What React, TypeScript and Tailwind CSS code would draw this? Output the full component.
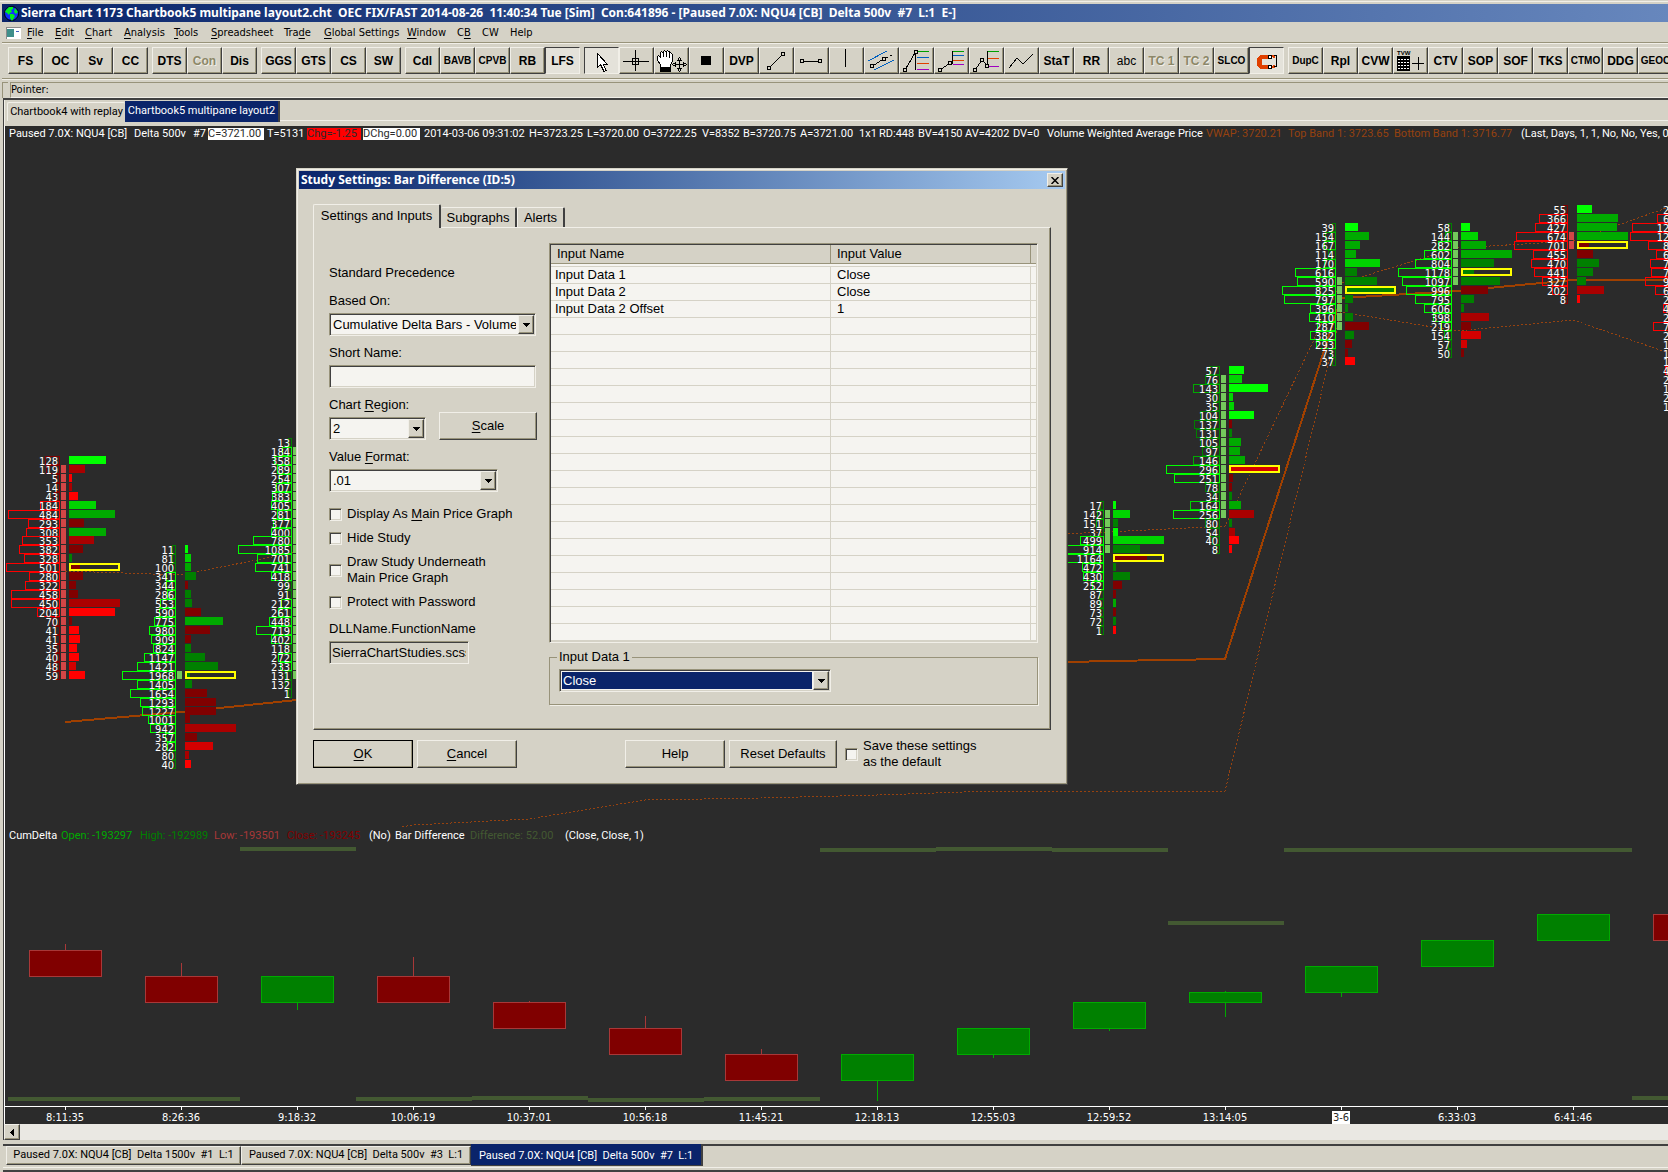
import { ReactNode, useState } from 'react';
import clsx from 'clsx';

const raised = 'bg-[#d5d2c6] border border-t-[#f1efe8] border-l-[#f1efe8] border-r-[#404040] border-b-[#404040] shadow-[inset_-1px_-1px_0_#98937a]';
const sunken = 'border border-t-[#98937a] border-l-[#98937a] border-r-[#f1efe8] border-b-[#f1efe8] shadow-[inset_1px_1px_0_#404040,inset_-1px_-1px_0_#d5d2c6]';
const tahoma = "font-['DejaVu_Sans_Condensed','DejaVu_Sans',sans-serif] text-[11px]";

/* ---------- footprint chart data ---------- */

type Shade = 'g1' | 'g2' | 'g3' | 'g4' | 'r1' | 'r2' | 'r3' | 'r4';
// traded volume, length of the delta bar, shade of the delta bar
type Level = [number, number, Shade];

const shades: Record<Shade, string> = {
  g1: '#008000',
  g2: '#00aa00',
  g3: '#00d400',
  g4: '#00ff00',
  r1: '#800000',
  r2: '#aa0000',
  r3: '#d40000',
  r4: '#ff0000',
};

interface Footprint {
  col: number;
  tick: number;
  side: 'up' | 'down';
  area: [number, number];
  levels: Level[];
}

const plain = (values: number[]): Level[] => values.map(v => [v, 5, 'g1']);

const footprints: Footprint[] = [
  {
    col: 0, tick: 10, side: 'down', area: [1, 24],
    levels: [
      [128, 37, 'g4'], [119, 16, 'r2'], [5, 3, 'r4'], [14, 3, 'r2'], [43, 9, 'r4'], [184, 27, 'g3'], [484, 46, 'g2'],
      [293, 15, 'r1'], [308, 37, 'g2'], [353, 25, 'r2'], [382, 14, 'r1'], [328, 3, 'g1'], [501, 11, 'r1'], [280, 14, 'r1'],
      [322, 7, 'r1'], [458, 9, 'r1'], [450, 51, 'r2'], [204, 46, 'r4'], [70, 3, 'r1'], [41, 10, 'r4'], [41, 11, 'r4'],
      [35, 8, 'r4'], [40, 10, 'r4'], [48, 7, 'r3'], [59, 16, 'r4'],
    ],
  },
  {
    col: 1, tick: 20, side: 'up', area: [14, 14],
    levels: [
      [11, 3, 'g4'], [81, 6, 'g3'], [100, 6, 'g2'], [341, 11, 'g1'], [344, 3, 'r1'], [286, 6, 'g1'], [553, 7, 'g1'],
      [590, 16, 'r1'], [775, 38, 'g2'], [980, 25, 'r1'], [909, 6, 'r1'], [824, 6, 'g1'], [1147, 20, 'g1'], [1421, 33, 'g1'],
      [1968, 5, 'g1'], [1405, 7, 'g1'], [1654, 22, 'r1'], [1293, 31, 'r1'], [1227, 31, 'r1'], [1001, 5, 'r1'], [942, 51, 'r2'],
      [357, 12, 'r1'], [282, 28, 'r3'], [80, 4, 'r2'], [40, 6, 'r4'],
    ],
  },
  {
    col: 2, tick: 8, side: 'up', area: [1, 26],
    levels: plain([
      13, 184, 358, 289, 254, 307, 383, 405, 281, 377, 400, 780, 1085, 701, 741, 418, 99, 91, 212, 261, 448, 719, 402, 118,
      272, 233, 131, 132, 1,
    ]),
  },
  {
    col: 9, tick: 15, side: 'up', area: [1, 5],
    levels: [
      [17, 3, 'g4'], [142, 17, 'g3'], [151, 5, 'g1'], [37, 5, 'g4'], [499, 51, 'g3'], [914, 27, 'g1'], [1164, 34, 'r1'],
      [472, 3, 'g1'], [430, 17, 'g1'], [252, 9, 'r1'], [87, 3, 'r1'], [89, 3, 'g2'], [73, 3, 'r1'], [72, 3, 'g1'], [1, 3, 'r4'],
    ],
  },
  {
    col: 10, tick: 0, side: 'up', area: [1, 16],
    levels: [
      [57, 15, 'g4'], [76, 13, 'g3'], [143, 39, 'g4'], [30, 4, 'g3'], [35, 5, 'g3'], [104, 25, 'g4'], [137, 3, 'r1'],
      [131, 3, 'g1'], [105, 12, 'g2'], [97, 11, 'g2'], [146, 16, 'g2'], [296, 51, 'r3'], [251, 4, 'r1'], [78, 3, 'r1'],
      [34, 3, 'g1'], [164, 12, 'g2'], [256, 25, 'r2'], [80, 3, 'g1'], [54, 6, 'r2'], [40, 10, 'r4'], [8, 3, 'r4'],
    ],
  },
  {
    col: 11, tick: -16, side: 'up', area: [6, 11],
    levels: [
      [39, 13, 'g4'], [154, 24, 'g2'], [167, 15, 'g2'], [114, 11, 'g2'], [170, 35, 'g3'], [616, 12, 'g1'], [590, 32, 'g1'],
      [825, 51, 'g1'], [797, 8, 'g1'], [396, 3, 'g1'], [410, 8, 'g1'], [287, 24, 'r1'], [382, 9, 'g1'], [293, 7, 'r1'],
      [73, 3, 'r1'], [37, 10, 'r4'],
    ],
  },
  {
    col: 12, tick: -16, side: 'up', area: [1, 6],
    levels: [
      [58, 9, 'g4'], [144, 17, 'g3'], [282, 25, 'g2'], [602, 51, 'g2'], [804, 33, 'g1'], [1178, 13, 'g1'], [1097, 39, 'g1'],
      [996, 27, 'r1'], [795, 13, 'g1'], [606, 3, 'g1'], [398, 28, 'r2'], [219, 10, 'r1'], [154, 20, 'r3'], [57, 6, 'r3'],
      [50, 3, 'r1'],
    ],
  },
  {
    col: 13, tick: -18, side: 'down', area: [3, 4],
    levels: [
      [55, 15, 'g4'], [366, 41, 'g2'], [427, 40, 'g2'], [674, 51, 'g2'], [701, 12, 'r1'], [455, 16, 'r1'], [470, 22, 'g1'],
      [441, 16, 'g1'], [327, 9, 'g1'], [202, 27, 'r2'], [8, 3, 'r4'],
    ],
  },
  {
    col: 14, tick: -18, side: 'down', area: [3, 4],
    levels: plain([
      211, 630, 1214, 1270, 832, 640, 786, 756, 906, 664, 218, 470, 264, 711, 236, 152, 184, 168, 431, 242, 174, 223, 147,
    ]),
  },
];

const tickY = (tick: number) => Math.round(366.4 + tick * 8.95);

const outlineColor = (volume: number, side: 'up' | 'down') => {
  const step = volume < 140 ? 1 : volume < 160 ? 2 : volume < 180 ? 3 : 4;
  return shades[`${side === 'up' ? 'g' : 'r'}${step}` as Shade];
};

const FootprintBar = ({ col, tick, side, area, levels }: Footprint) => {
  const x = col * 116;
  const max = Math.max(...levels.map(l => l[0]));
  return (
    <g>
      {levels.map(([volume, bar, shade], i) => {
        const y = tickY(tick + i);
        const w = Math.max(3, Math.round((volume / max) * 53));
        return (
          <g key={i}>
            <rect x={x + 59.5 - w} y={y + 0.5} width={w} height={8} fill="none" stroke={outlineColor(volume, side)} />
            {i >= area[0] && i <= area[1] && (
              <rect x={x + 61} y={y} width={5} height={8} fill={side === 'up' ? '#74c95c' : '#d24646'} />
            )}
            <rect x={x + 69} y={y} width={bar} height={8} fill={shades[shade]} />
            {volume === max && (
              <rect x={x + 70} y={y + 1} width={49} height={6} fill="none" stroke="#ffff00" strokeWidth={2} />
            )}
            <text x={x + 58} y={y + 9} textAnchor="end" fill="#ffffff">{volume}</text>
          </g>
        );
      })}
    </g>
  );
};

/* ---------- lower pane data ---------- */

// open/close box top, bottom, wick top, wick bottom, direction
const candles: [number, number, number, number, 'up' | 'down'][] = [
  [950, 976, 944, 976, 'down'],
  [976, 1002, 963, 1002, 'down'],
  [976, 1002, 976, 1009, 'up'],
  [976, 1002, 957, 1002, 'down'],
  [1002, 1028, 1001, 1028, 'down'],
  [1028, 1054, 1016, 1054, 'down'],
  [1054, 1080, 1049, 1080, 'down'],
  [1054, 1080, 1054, 1100, 'up'],
  [1028, 1054, 1028, 1057, 'up'],
  [1002, 1028, 1002, 1030, 'up'],
  [992, 1002, 991, 1016, 'up'],
  [966, 992, 966, 996, 'up'],
  [940, 966, 940, 966, 'up'],
  [914, 940, 914, 940, 'up'],
  [914, 940, 914, 940, 'down'],
];
const differences = [1097, 1097, 847, 1097, 1096, 1098, 1097, 848, 847, 848, 921, 848, 848, 848, 1096];

const times = [
  '8:11:35', '8:26:36', '9:18:32', '10:06:19', '10:37:01', '10:56:18', '11:45:21', '12:18:13', '12:55:03', '12:59:52',
  '13:14:05', '3-6', '6:33:03', '6:41:46',
];

/* ---------- toolbar ---------- */

const Node = ({ x, y }: { x: number; y: number }) => (
  <rect x={x - 1.5} y={y - 1.5} width={3} height={3} fill="#d5d2c6" stroke="#000" />
);

const levelLines = (x1: number, x2: number, lines: [number, string][]) =>
  lines.map(([y, color]) => <line key={y} x1={x1} x2={x2} y1={y + 0.5} y2={y + 0.5} stroke={color} />);

const icons: Record<string, ReactNode> = {
  pointer: <path d="M13.5 6.5v14l3-3 3.500 7 2-1-3-6.500h4z" fill="#fff" stroke="#000" />,
  crosshair: (
    <g fill="none" stroke="#000">
      <path d="M4 14.500h26M16.500 3v21" />
      <rect x="13.5" y="11.5" width="6" height="6" />
    </g>
  ),
  hand: (
    <g>
      <path d="M6.500 20.500v-3l-3-4v-4l1-1 2 2V6l1-1.500 1.500 1V4.500l1.500-1 1.500 1 1.500-1 1.500 1v1.500l1.500-.5 1.500 1.500v8l-2 4v1.500z" fill="#fff" stroke="#000" />
      <path d="M9.500 5v5M12.500 4v6M15.500 6v5" stroke="#000" />
      <rect x="6" y="21" width="11" height="4" />
      <path d="M25.500 12v11M20 17.500h11" stroke="#000" />
      <path d="M23.500 13.500l2-3 2 3zM23.500 21.500l2 3 2-3zM21.500 15.500l-3 2 3 2zM29.500 15.500l3 2-3 2z" fill="#d5d2c6" stroke="#000" />
    </g>
  ),
  marker: <rect x="12" y="9" width="10" height="9" />,
  line: <g><path d="M10 21L24 7" stroke="#000" /><Node x={10} y={21} /><Node x={24} y={7} /></g>,
  segment: <g><path d="M8 14h18" stroke="#000" /><Node x={8} y={14} /><Node x={26} y={14} /></g>,
  vertical: <path d="M16.500 2v18" stroke="#000" />,
  channel: (
    <g>
      <path d="M4 14L23 4M10 23L30 13" stroke="#0060c0" />
      <path d="M8 19L20 12L28 8" stroke="#000" strokeDasharray="4 1" />
      <Node x={8} y={19} /><Node x={20} y={12} />
    </g>
  ),
  retrace: (
    <g>
      <path d="M6 23L16.500 5v18" fill="none" stroke="#000" />
      {levelLines(18, 30, [[4, '#00a000'], [10, '#0060c0'], [16, '#e04000'], [22, '#a000c0']])}
      <Node x={6} y={23} /><Node x={17} y={5} />
    </g>
  ),
  extend: (
    <g>
      <path d="M6 23L16 16h2.500V4" fill="none" stroke="#000" />
      {levelLines(19, 30, [[4, '#00a000'], [8, '#0060c0'], [13, '#e04000'], [17, '#a000c0']])}
      <Node x={6} y={23} /><Node x={16} y={16} />
    </g>
  ),
  project: (
    <g>
      <path d="M6 23L13 13L18.500 19V4" fill="none" stroke="#000" />
      {levelLines(19, 30, [[4, '#00a000'], [11, '#e04000'], [19, '#a000c0']])}
      <Node x={6} y={23} /><Node x={13} y={13} /><Node x={18} y={19} />
    </g>
  ),
  zigzag: <path d="M5 21L13 11L19 17L29 7" fill="none" stroke="#000" />,
  magnet: (
    <g>
      <path d="M20 8h-9l-3 3v8l3 3h9v-4h-7v-6h7z" fill="#e04000" />
      <path d="M19.500 8.500h3v3h-3zM19.500 18.500h3v3h-3z" fill="#fff" stroke="#000" />
      <path d="M23 9.500l1-1 1 2 1-2M23 19.500l1 1 1-2 1 2" fill="none" stroke="#e04000" />
      <path d="M25 8.500h2v11h-2" fill="none" stroke="#000" />
    </g>
  ),
  table: (
    <g>
      <text x="4" y="8" fontSize="6" fontWeight="bold">TVW</text>
      <rect x="4" y="9" width="13" height="15" />
      <path d="M5 12.500h11M5 15.500h11M5 18.500h11M5 21.500h11" stroke="#fff" strokeDasharray="2 1" />
      <path d="M19 16.500h12M25.500 10v13" stroke="#000" />
    </g>
  ),
};

const toolGroups: string[][] = [
  ['FS', 'OC', 'Sv', 'CC'],
  ['DTS', 'Con', 'Dis'],
  ['GGS', 'GTS', 'CS', 'SW'],
  ['Cdl', 'BAVB', 'CPVB', 'RB', 'LFS'],
  [
    'pointer', 'crosshair', 'hand', 'marker', 'DVP', 'line', 'segment', 'vertical', 'channel', 'retrace', 'extend',
    'project', 'zigzag', 'StaT', 'RR', 'abc', 'TC 1', 'TC 2', 'SLCO', 'magnet',
  ],
  ['DupC', 'Rpl', 'CVW', 'table', 'CTV', 'SOP', 'SOF', 'TKS', 'CTMO', 'DDG', 'GEOC'],
];
const pressed = ['LFS', 'pointer', 'magnet'];
const disabled = ['Con', 'TC 1', 'TC 2'];
const wide = ['BAVB', 'CPVB', 'SLCO', 'DupC', 'CTMO', 'GEOC'];

const ToolButton = ({ name }: { name: string }) => (
  <button
    aria-label={name}
    disabled={disabled.includes(name)}
    className={clsx(
      'flex h-[27px] w-[35px] shrink-0 items-center justify-center overflow-hidden whitespace-nowrap',
      "font-['Liberation_Sans_Narrow','Liberation_Sans',sans-serif]",
      wide.includes(name) ? 'text-[10px]' : 'text-[12px]',
      name === 'abc' ? 'font-normal' : 'font-bold',
      pressed.includes(name)
        ? 'border border-t-[#404040] border-l-[#404040] border-r-[#f1efe8] border-b-[#f1efe8] bg-[#e4e2da]'
        : raised,
      disabled.includes(name) ? 'text-[#8c8768] [text-shadow:1px_1px_0_#f1efe8]' : 'text-black',
    )}
  >
    {icons[name] ? (
      <svg width="35" height="27" className="-m-px shrink-0" shapeRendering="crispEdges">{icons[name]}</svg>
    ) : (
      name
    )}
  </button>
);

/* ---------- small controls ---------- */

// Draws the accelerator letter of a caption underlined: "&File"
const Caption = ({ text }: { text: string }) => {
  const at = text.indexOf('&');
  if (at < 0) return <>{text}</>;
  return (
    <>
      {text.slice(0, at)}
      <span className="underline underline-offset-2">{text[at + 1]}</span>
      {text.slice(at + 2)}
    </>
  );
};

const Groove = () => <div className="ml-0.5 h-0.5 border-t border-b border-t-[#98937a] border-b-[#f1efe8]" />;

const PushButton = ({ text, className }: { text: string; className?: string }) => (
  <button className={clsx('h-7 shrink-0', raised, className)}>
    <Caption text={text} />
  </button>
);

interface ComboProps {
  id: string;
  value: string;
  className: string;
  selected?: boolean;
}

const Combo = ({ id, value, className, selected }: ComboProps) => (
  <div className={clsx('flex h-[23px] bg-[#f5f4f0] p-px', sunken, className)}>
    <select
      id={id}
      defaultValue={value}
      className={clsx(
        'min-w-0 flex-1 appearance-none overflow-hidden rounded-none outline-none',
        selected ? 'm-px bg-[#0a246a] px-px text-white' : 'px-0.5 text-black',
      )}
    >
      <option>{value}</option>
    </select>
    <span className={clsx('flex w-4 shrink-0 items-center justify-center', raised)}>
      <svg width="7" height="4" shapeRendering="crispEdges"><path d="M0 0h7L3.500 4z" /></svg>
    </span>
  </div>
);

const Check = ({ id, children, className }: { id: string; children: ReactNode; className?: string }) => (
  <div className={clsx('flex items-center gap-[5px]', className)}>
    <input id={id} type="checkbox" className={clsx('h-[13px] w-[13px] shrink-0 appearance-none bg-[#f5f4f0]', sunken)} />
    <label htmlFor={id}>{children}</label>
  </div>
);

/* ---------- dialog ---------- */

const inputs = [
  ['Input Data 1', 'Close'],
  ['Input Data 2', 'Close'],
  ['Input Data 2 Offset', '1'],
];
const rows = Array.from({ length: 22 }, (_, i) => inputs[i] ?? ['', '']);

const StudyDialog = () => {
  const [shortName, setShortName] = useState('');

  return (
    <div
      role="dialog"
      aria-labelledby="study-title"
      className="absolute top-[168px] left-[296px] w-[772px] border border-t-[#d5d2c6] border-l-[#d5d2c6] border-r-[#404040] border-b-[#404040] bg-[#d5d2c6] p-0.5 font-['Liberation_Sans',sans-serif] text-[13px] leading-4 text-black shadow-[inset_1px_1px_0_#f1efe8,inset_-1px_-1px_0_#98937a]"
    >
      <div className="flex h-[18px] items-center justify-between bg-linear-to-r from-[#0a246a] to-[#a6caf0] pr-0.5 pl-0.5">
        <h2 id="study-title" className="font-['Noto_Sans',sans-serif] text-[12px] font-bold text-white">
          Study Settings: Bar Difference (ID:5)
        </h2>
        <button aria-label="Close" className={clsx('flex h-3.5 w-4 items-center justify-center', raised)}>
          <svg width="8" height="7"><path d="M.5 0L7.500 7M7.500 0L.5 7" stroke="#000" strokeWidth="1.500" /></svg>
        </button>
      </div>

      <div className="px-3.5 pt-[15px] pb-3.5">
        <div className="flex h-[23px] items-end">
          <button className="relative -mb-px h-6 w-[128px] rounded-t-xs border-t border-r-2 border-l border-t-[#f1efe8] border-r-[#404040] border-l-[#f1efe8] bg-[#d5d2c6] pb-0.5">
            Settings and Inputs
          </button>
          <button className="h-5 w-[76px] rounded-t-xs border-t border-r-2 border-t-[#f1efe8] border-r-[#404040]">Subgraphs</button>
          <button className="h-5 w-12 rounded-t-xs border-t border-r-2 border-l border-t-[#f1efe8] border-r-[#404040] border-l-[#f1efe8]">Alerts</button>
        </div>

        <div className={clsx('flex pt-[15px] pr-3 pb-6 pl-[15px]', raised)}>
          <div className="w-[220px] shrink-0 pt-[22px]">
            <p>Standard Precedence</p>
            <label htmlFor="based-on" className="mt-3 block">Based On:</label>
            <Combo id="based-on" value="Cumulative Delta Bars - Volume" className="mt-1 w-[207px]" />
            <label htmlFor="short-name" className="mt-[9px] block">Short Name:</label>
            <input
              id="short-name"
              value={shortName}
              onChange={e => setShortName(e.target.value)}
              className={clsx('mt-1 block h-[23px] w-[207px] bg-[#f5f4f0] px-1 outline-none', sunken)}
            />
            <label htmlFor="region" className="mt-[9px] block"><Caption text="Chart &Region:" /></label>
            <div className="mt-1 flex h-[23px] items-end gap-[13px]">
              <Combo id="region" value="2" className="w-[97px]" />
              <PushButton text="&Scale" className="w-[98px]" />
            </div>
            <label htmlFor="format" className="mt-[9px] block"><Caption text="Value &Format:" /></label>
            <Combo id="format" value=".01" className="mt-1 w-[169px]" />

            <div className="mt-3.5 flex flex-col gap-2">
              <Check id="main"><Caption text="Display As &Main Price Graph" /></Check>
              <Check id="hide">Hide Study</Check>
              <Check id="under">Draw Study Underneath<br />Main Price Graph</Check>
              <Check id="protect">Protect with Password</Check>
            </div>

            <label htmlFor="dll" className="mt-[11px] block">DLLName.FunctionName</label>
            <input
              id="dll"
              readOnly
              value="SierraChartStudies.scss"
              className={clsx('mt-1 block h-[23px] w-[140px] bg-[#d5d2c6] px-0.5 outline-none', sunken)}
            />
          </div>

          <div className="min-w-0 flex-1">
            <div className={clsx('bg-[#f5f4f0] p-px', sunken)}>
              <table className="w-full table-fixed border-separate border-spacing-0 text-left">
                <thead className="bg-[#d5d2c6]">
                  <tr className="h-[19px]">
                    <th className="w-[280px] border-r border-b border-[#98937a] p-0 pl-1.5 font-normal">Input Name</th>
                    <th className="w-[200px] border-r border-b border-[#98937a] p-0 pl-1.5 font-normal">Input Value</th>
                    <th className="border-b border-[#98937a] p-0" />
                  </tr>
                </thead>
                <tbody>
                  <tr className="h-[3px]"><td colSpan={3} className="border-b border-[#d5d2c6] p-0" /></tr>
                  {rows.map(([name, value], i) => (
                    <tr key={i} className="h-[17px]">
                      <td className="border-r border-b border-[#d5d2c6] p-0 pl-1">{name}</td>
                      <td className="border-r border-b border-[#d5d2c6] p-0 pl-1.5">{value}</td>
                      <td className="border-b border-[#d5d2c6] p-0" />
                    </tr>
                  ))}
                </tbody>
              </table>
            </div>

            <fieldset className="mt-1.5 border border-[#98937a] pt-1 pr-2 pb-3 pl-[9px] shadow-[1px_1px_0_#f1efe8]">
              <legend className="-ml-0.5 px-0.5">
                <label htmlFor="input-value">Input Data 1</label>
              </legend>
              <Combo id="input-value" value="Close" className="w-[272px]" selected />
            </fieldset>
          </div>
        </div>

        <div className="mt-2.5 flex h-7 items-center gap-1">
          <PushButton text="&OK" className="w-[100px] outline outline-black -outline-offset-1" />
          <PushButton text="&Cancel" className="w-[100px]" />
          <PushButton text="Help" className="ml-[104px] w-[100px]" />
          <PushButton text="Reset Defaults" className="w-[108px]" />
          <Check id="save" className="ml-1">Save these settings<br />as the default</Check>
        </div>
      </div>
    </div>
  );
};

/* ---------- window ---------- */

const menus: [string, string][] = [
  ['&File', 'w-7'], ['&Edit', 'w-[30px]'], ['&Chart', 'w-[39px]'], ['&Analysis', 'w-[50px]'], ['&Tools', 'w-[37px]'],
  ['&Spreadsheet', 'w-[73px]'], ['Tra&de', 'w-10'], ['&Global Settings', 'w-[83px]'], ['&Window', 'w-[50px]'],
  ['C&B', 'w-[25px]'], ['CW', 'w-7'], ['Help', 'w-8'],
];

const priceFields: [string, string][] = [
  ['Paused 7.0X: NQU4 [CB]', 'w-[125px]'],
  ['Delta 500v', 'w-[59px]'],
  ['#7', 'w-[15px]'],
  ['C=3721.00', 'w-14 bg-white text-[#2b2b2b]'],
  ['T=5131', 'ml-[3px] w-10'],
  ['Chg=-1.25', 'w-[54px] bg-[#ff0000] text-[#2b2b2b]'],
  ['DChg=0.00', 'ml-0.5 w-[57px] bg-white text-[#2b2b2b]'],
  ['2014-03-06 09:31:02', 'ml-1 w-[105px]'],
  ['H=3723.25', 'w-[58px]'],
  ['L=3720.00', 'w-14'],
  ['O=3722.25', 'w-[59px]'],
  ['V=8352', 'w-[41px]'],
  ['B=3720.75', 'w-[57px]'],
  ['A=3721.00', 'w-[59px]'],
  ['1x1', 'w-5'],
  ['RD:448', 'w-[39px]'],
  ['BV=4150', 'w-[47px]'],
  ['AV=4202', 'w-12'],
  ['DV=0', 'w-[34px]'],
  ['Volume Weighted Average Price', 'w-[159px]'],
  ['VWAP: 3720.21', 'w-[82px] text-[#96420f]'],
  ['Top Band 1: 3723.65', 'w-[106px] text-[#96420f]'],
  ['Bottom Band 1: 3716.77', 'w-[127px] text-[#96420f]'],
  ['(Last, Days, 1, 1, No, No, Yes, 0)', ''],
];

const studyFields: [string, string][] = [
  ['CumDelta', 'w-[52px]'],
  ['Open: -193297', 'w-[79px] text-[#00aa00]'],
  ['High: -192989', 'w-[74px] text-[#008000]'],
  ['Low: -193501', 'w-[73px] text-[#a83838]'],
  ['Close: -193245', 'w-[82px] text-[#800000]'],
  ['(No)', 'w-[26px]'],
  ['Bar Difference', 'w-[75px]'],
  ['Difference: 52.00', 'w-[95px] text-[#435932]'],
  ['(Close, Close, 1)', ''],
];

const FieldRow = ({ fields }: { fields: [string, string][] }) => (
  <div className="flex h-3.5 items-center overflow-hidden pt-0.5 pl-1 font-['Roboto',sans-serif] leading-3 whitespace-pre text-white">
    {fields.map(([text, className]) => (
      <span key={text} className={clsx('shrink-0', className)}>{text}</span>
    ))}
  </div>
);

const App = () => (
  <div className={clsx('relative flex min-h-screen flex-col overflow-hidden bg-[#d5d2c6] text-black', tahoma)}>
    <div className="mt-px h-[3px] border-t border-[#f1efe8]" />
    <header className="ml-0.5 flex h-[18px] items-center gap-0.5 bg-linear-to-r from-[#0a246a] to-[#6787bd] pl-0.5">
      <svg width="15" height="15" viewBox="0 0 15 15">
        <circle cx="7.5" cy="7.5" r="7" fill="#1030ff" stroke="#000" />
        <path d="M2 4l3-3 4 0 0 2-2 1 1 2-2 1-1 2-2-2-2-1zM11 2l3 4-2 2-2-2zM6 8l3 0 2 2-1 2-2 3-2-3z" fill="#00f020" />
      </svg>
      <h1 className="font-['Noto_Sans',sans-serif] text-[12px] font-bold whitespace-pre text-white">
        {'Sierra Chart 1173 Chartbook5 multipane layout2.cht  OEC FIX/FAST 2014-08-26  11:40:34 Tue [Sim]  Con:641896 - [Paused 7.0X: NQU4 [CB]  Delta 500v  #7  L:1  E-]'}
      </h1>
    </header>

    <nav className="flex h-5 items-center pt-0.5 pl-1.5">
      <svg width="15" height="12" shapeRendering="crispEdges" className="mr-1.5">
        <rect width="15" height="12" fill="#fff" stroke="#8a8a8a" />
        <rect x="1" y="2" width="7" height="8" fill="#3f8f8a" />
        <rect x="10" y="4" width="3" height="1" fill="#4060c0" />
      </svg>
      {menus.map(([text, width]) => (
        <button key={text} className={clsx('shrink-0 text-left whitespace-nowrap', width)}>
          <Caption text={text} />
        </button>
      ))}
    </nav>
    <Groove />

    <div className="flex gap-1 overflow-hidden pt-[3px] pb-1 pl-2">
      {toolGroups.map((group, i) => (
        <div key={i} className="flex shrink-0">
          {group.map(name => <ToolButton key={name} name={name} />)}
        </div>
      ))}
    </div>
    <Groove />

    <div className="mt-0.5 flex h-4 gap-0.5 pl-0.5">
      <div className="w-1.5 border-t border-l border-[#98937a]" />
      <div className="flex flex-1 items-center border-t border-b border-l border-t-[#98937a] border-b-[#f1efe8] border-l-[#98937a]">
        Pointer:
      </div>
    </div>

    <main className="ml-[3px] flex flex-1 flex-col border-t-2 border-l border-[#404040]">
      <div className="flex h-[26px] items-start border-l border-[#f1efe8] pl-0.5 font-['Roboto',sans-serif]">
        <button className="mt-0.5 h-[19px] w-[118px] rounded-t-xs border-t border-l border-[#f1efe8] whitespace-nowrap">Chartbook4 with replay</button>
        <button className="mt-px h-[21px] w-[155px] border-r-2 border-[#404040] bg-[#0a246a] whitespace-nowrap text-white">Chartbook5 multipane layout2</button>
        <div className="mt-5 flex-1 border-t border-[#f1efe8]" />
      </div>

      <section className="flex flex-1 flex-col overflow-hidden border-l border-white bg-[#2b2b2b]">
        <FieldRow fields={priceFields} />
        <svg className="h-[688px] w-full" shapeRendering="crispEdges" fontSize="11">
          <g transform="translate(-5 -140)">
            <g fill="none" stroke="#a04000">
              <path d="M65 722L181 712L297 700L992 664L1109 661L1225 659L1341 298L1457 291L1573 280L1689 280" strokeWidth="2" />
              <g strokeDasharray="2 2" stroke="#96420f">
                <path d="M65 571L181 575L297 552M1060 534L1109 532L1225 526L1341 283L1457 248L1573 241L1689 200" />
                <path d="M402 827L413 825L529 819L645 800L761 798L877 795L993 791L1225 791L1341 312L1457 331L1573 320L1689 360" />
              </g>
            </g>
            {footprints.map(f => <FootprintBar key={f.col} {...f} />)}
          </g>
        </svg>

        <FieldRow fields={studyFields} />
        <svg className="h-[264px] w-full" shapeRendering="crispEdges">
          <g transform="translate(-5 -842)">
            {differences.map((y, i) => (
              <rect key={i} x={8 + i * 116} y={y} width={116} height={4} fill="#435932" />
            ))}
            {candles.map(([top, bottom, high, low, dir], i) => {
              const stroke = dir === 'up' ? '#00aa00' : '#a83838';
              return (
                <g key={i} stroke={stroke}>
                  <path d={`M${65.5 + i * 116} ${high}V${low + 1}`} />
                  <rect x={29.5 + i * 116} y={top + 0.5} width={72} height={bottom - top} fill={dir === 'up' ? '#008000' : '#800000'} />
                </g>
              );
            })}
          </g>
        </svg>

        <div className="h-[18px] border-t border-white">
          <div className="flex pl-0.5 text-white">
            {times.map(time => (
              <div key={time} className="flex w-29 shrink-0 flex-col items-center gap-px leading-[13px]">
                <span className="h-[3px] w-px bg-white" />
                <span className={clsx('px-px', time === '3-6' && 'bg-white text-[#2b2b2b]')}>{time}</span>
              </div>
            ))}
          </div>
        </div>
      </section>

      <div className="h-4 bg-[#eae8e3]">
        <button aria-label="Scroll left" className={clsx('flex h-4 w-4 items-center justify-center', raised)}>
          <svg width="4" height="7" shapeRendering="crispEdges"><path d="M4 0v7L0 3.500z" /></svg>
        </button>
      </div>
    </main>

    <footer className="mt-1 ml-[3px] flex h-7 flex-col border-b-2 border-[#404040]">
      <div className="flex h-[22px] items-start border-t-2 border-[#404040] pl-[3px] font-['Roboto',sans-serif] whitespace-pre">
        <button className={clsx('h-[19px] w-[235px]', raised)}>{'Paused 7.0X: NQU4 [CB]  Delta 1500v  #1  L:1'}</button>
        <button className={clsx('h-[19px] w-[230px]', raised)}>{'Paused 7.0X: NQU4 [CB]  Delta 500v  #3  L:1'}</button>
        <button className="-mt-0.5 h-[22px] w-[232px] border-r-2 border-b border-[#404040] bg-[#0a246a] pt-1 text-white">
          {'Paused 7.0X: NQU4 [CB]  Delta 500v  #7  L:1'}
        </button>
      </div>
      <div className="mt-px h-px bg-[#f1efe8]" />
    </footer>

    <StudyDialog />
  </div>
);

export default App;
